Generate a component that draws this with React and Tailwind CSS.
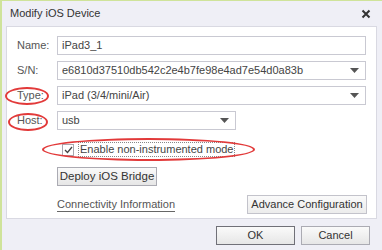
import React from 'react';

const font = { fontFamily: '"Liberation Sans", Arial, sans-serif' };

function Caret() {
  return (
    <svg width="9" height="5" viewBox="0 0 9 5" className="shrink-0">
      <path d="M0 0 L9 0 L4.5 5 Z" fill="#555" />
    </svg>
  );
}

function Field({ label, value, select, width = 'w-[309px]' }) {
  return (
    <div className="flex items-center h-[19px]">
      <div className="w-[40px] text-[11px] text-[#555]">{label}</div>
      <div className={`${width} h-[19px] border border-[#c9c9d2] bg-white flex items-center pl-[4px] pr-[6px]`}>
        <span className="flex-1 text-[11px] text-[#444] truncate">{value}</span>
        {select && <Caret />}
      </div>
    </div>
  );
}

function Ring({ className }) {
  return <div className={`absolute border-2 border-[#e23a3a] rounded-[50%] ${className}`} />;
}

export default function App() {
  return (
    <div style={font} className="relative w-[382px] h-[250px] bg-[#efeff6] border-t border-l-2 border-[#cfe39a] overflow-hidden">
      {/* title */}
      <div className="h-[25px] flex items-center justify-between pl-[8px] pr-[11px]">
        <span className="text-[11px] text-[#333]">Modify iOS Device</span>
        <svg width="10" height="10" viewBox="0 0 10 10">
          <path d="M1.5 1.5 L8.5 8.5 M8.5 1.5 L1.5 8.5" stroke="#333" strokeWidth="2" />
        </svg>
      </div>

      {/* panel */}
      <div className="ml-[4px] mr-[5px] h-[193px] bg-white border border-[#d9d9e2] pl-[10px] pt-[9px] flex flex-col">
        <div className="flex flex-col gap-[6px]">
          <Field label="Name:" value="iPad3_1" />
          <Field label="S/N:" value="e6810d37510db542c2e4b7fe98e4ad7e54d0a83b" select />
          <Field label="Type:" value="iPad (3/4/mini/Air)" select />
          <Field label="Host:" value="usb" select width="w-[179px]" />
        </div>

        <div className="ml-[45px] mt-[12px] flex items-center gap-[4px] h-[15px]">
          <div className="w-[12px] h-[12px] border border-[#a8a8b0] bg-white flex items-center justify-center">
            <svg width="9" height="8" viewBox="0 0 9 8">
              <path d="M1 4 L3.5 6.5 L8 1" fill="none" stroke="#444" strokeWidth="1.3" />
            </svg>
          </div>
          <span className="text-[11px] text-[#444] border border-dotted border-[#888] px-[1px] leading-[13px]">Enable non-instrumented mode</span>
        </div>

        <div className="ml-[40px] mt-[6px]">
          <button className="h-[19px] w-[100px] border border-[#ababb3] bg-gradient-to-b from-[#fafafa] to-[#e6e6e6] text-[11.5px] text-[#333] whitespace-nowrap">
            Deploy iOS Bridge
          </button>
        </div>

        <div className="ml-[40px] mt-[8px] mr-[9px] flex items-center justify-between">
          <span className="text-[11px] text-[#555] underline underline-offset-[3px] decoration-[#666]">Connectivity Information</span>
          <button className="h-[19px] w-[120px] border border-[#c3c3cb] bg-gradient-to-b from-[#fafafa] to-[#ececec] text-[11px] text-[#333] whitespace-nowrap">
            Advance Configuration
          </button>
        </div>
      </div>

      {/* footer */}
      <div className="flex justify-end gap-[6px] pr-[12px] pt-[7px]">
        <button className="w-[79px] h-[19px] border border-[#707078] bg-gradient-to-b from-[#fafafa] to-[#e6e6e6] text-[11px] text-[#333]">OK</button>
        <button className="w-[69px] h-[19px] border border-[#ababb3] bg-gradient-to-b from-[#fafafa] to-[#e6e6e6] text-[11px] text-[#333]">Cancel</button>
      </div>

      {/* annotations */}
      <Ring className="left-[3px] top-[86px] w-[44px] h-[18px]" />
      <Ring className="left-[6px] top-[112px] w-[40px] h-[18px]" />
      <Ring className="left-[40px] top-[137px] w-[213px] h-[23px]" />
    </div>
  );
}
